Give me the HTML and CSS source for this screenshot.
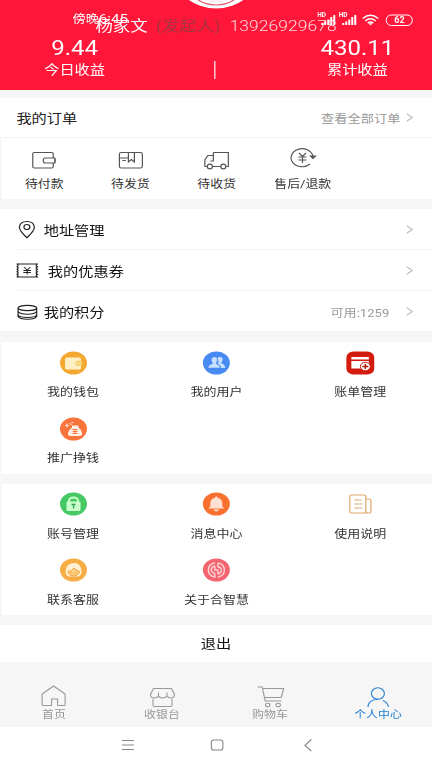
FILE: index.html
```html
<!DOCTYPE html>
<html lang="zh-CN">
<head>
<meta charset="utf-8">
<title>个人中心</title>
<link rel="stylesheet" href="styles.css">
</head>
<body>
<div class="screen">
  <header class="hero">
    <svg class="avatar" viewBox="0 0 60 10" preserveAspectRatio="none"><ellipse cx="30" cy="-27" rx="42" ry="35.500" fill="#fff"/><ellipse cx="30" cy="-27" rx="33" ry="32" fill="#fff" stroke="#e0566a" stroke-width="1.200"/><ellipse cx="30" cy="-26" rx="26" ry="28.500" fill="#fbeeee"/></svg>
    <div class="user"><span>杨家文</span><span class="role">(发起人)</span><span class="phone">13926929678</span></div>
    <div class="stats">
      <div class="stat"><b>9.44</b><span>今日收益</span></div>
      <i class="bar"></i>
      <div class="stat"><b>430.11</b><span>累计收益</span></div>
    </div>
    <div class="status">
      <span class="clock">傍晚<em>6:45</em></span>
      <svg class="signals" viewBox="0 0 98 16" preserveAspectRatio="none">
        <g fill="#fff"><text x="0" y="6.500" class="hd">HD</text><text x="21.500" y="6.500" class="hd">HD</text>
        <path d="M4 12h2v2H4zM7 10.500h2V14H7zM10 8.500h2V14h-2zM13 6h2v8h-2zM16 4h2v10h-2zM25 12h2v2h-2zM28 10.500h2V14h-2zM31 8.500h2V14h-2zM34 6h2v8h-2zM37 4h2v10h-2z"/></g>
        <g fill="none" stroke="#fff" stroke-width="1.500"><path d="M45.500 7.500q7.500-6.500 15.500 0M48 10q5-4.300 10.500 0M50.500 12.200q2.700-2.200 5.500 0"/><rect x="69" y="4" width="26" height="10.500" rx="5" stroke-width="1"/></g>
        <path d="M51.500 12.500q1.700-1 3.500 0l-1.700 2z" fill="#fff"/>
        <text x="77" y="12.500" class="bat">62</text>
      </svg>
    </div>
  </header>

  <section class="orders">
    <div class="orders-head"><span class="title">我的订单</span><span class="more">查看全部订单</span><svg class="arrow" viewBox="0 0 7 9" preserveAspectRatio="none"><path d="M.5 .7L6 4.500L.5 8.300"/></svg></div>
    <div class="orders-grid">
      <div class="order"><svg class="line" viewBox="0 0 30 24" preserveAspectRatio="none"><path d="M24 10V6q0-1.500-1.500-1.500H5Q3.500 4.500 3.500 6v12.500Q3.500 20 5 20h17.500q1.500 0 1.500-1.500V15M16 10h9.500v5H16q-2 0-2-2.500t2-2.500M26 10.500v4"/></svg><span>待付款</span></div>
      <div class="order"><svg class="line" viewBox="0 0 30 24" preserveAspectRatio="none"><rect x="3.500" y="4.500" width="23" height="15.500" rx="1.800"/><path d="M4 10h8M6.500 12.500H10M12.500 4.500V14l3-2.500 3 2.500V4.500"/></svg><span>待发货</span></div>
      <div class="order"><svg class="line" viewBox="0 0 30 24" preserveAspectRatio="none"><path d="M12 4.500h15v14h-2M19 18.500H11M5.500 18.500H3.500V12l3-4.500H12M12 4.500V13H9"/><ellipse cx="8.500" cy="18.500" rx="2.600" ry="2.300"/><ellipse cx="22" cy="18.500" rx="2.600" ry="2.300"/></svg><span>待收货</span></div>
      <div class="order"><svg class="line" viewBox="0 0 30 24" preserveAspectRatio="none"><path d="M22 18A11 9 0 1 1 25 10.500"/><path d="M22.500 10h5L25 12.500z" fill="#555"/><path d="M11 7l3.500 3.500L18 7M14.500 10.500V17M10.500 11h8M10.500 14h8"/></svg><span>售后/退款</span></div>
    </div>
  </section>

  <section class="rows">
    <div class="row"><svg class="pin dark" viewBox="0 0 22 20" preserveAspectRatio="none"><path d="M10.500 18.700Q3 12 3 8.300 3.500 2.500 10.500 2.500t7.500 5.800Q18 12 10.500 18.700z"/><ellipse cx="10.500" cy="8" rx="3" ry="2.500"/></svg><span class="label">地址管理</span><svg class="arrow" viewBox="0 0 7 9" preserveAspectRatio="none"><path d="M.5 .7L6 4.500L.5 8.300"/></svg></div>
    <div class="row"><svg class="coupon dark" viewBox="0 0 22 20" preserveAspectRatio="none"><path d="M0 4h21.500M0 17h21.500"/><path d="M.5 4q2.500 1.100 0 2.600 2.500 1.300 0 2.600 2.500 1.300 0 2.600 2.500 1.300 0 2.600 2.500 1.300 0 2.600M21 4q-2.500 1.100 0 2.600-2.500 1.300 0 2.600-2.500 1.300 0 2.600-2.500 1.300 0 2.600-2.500 1.300 0 2.600"/><path d="M7.500 7l3.300 3L14 7M10.800 10v4.500M7 10.500h7.500M7 12.500h7.500" stroke-width="1"/></svg><span class="label">我的优惠券</span><svg class="arrow" viewBox="0 0 7 9" preserveAspectRatio="none"><path d="M.5 .7L6 4.500L.5 8.300"/></svg></div>
    <div class="row"><svg class="coins dark" viewBox="0 0 22 20" preserveAspectRatio="none"><ellipse cx="11" cy="6" rx="9.300" ry="2.700"/><path d="M1.700 6v3.500q1.500 2.700 9.300 2.700t9.300-2.700V6M1.700 9.500V13q1.500 2.500 9.300 2.500t9.300-2.500V9.500M1.700 13v1.500Q3 17.200 11 17.200t9.300-2.700V13" stroke-width="1.150"/></svg><span class="label">我的积分</span><span class="points">可用:1259</span><svg class="arrow" viewBox="0 0 7 9" preserveAspectRatio="none"><path d="M.5 .7L6 4.500L.5 8.300"/></svg></div>
  </section>

  <section class="card">
    <div class="tile"><svg viewBox="0 0 30 24" preserveAspectRatio="none"><ellipse cx="15" cy="12" rx="13.500" ry="11.500" fill="#f5a830"/><rect x="6.500" y="6.500" width="16" height="12" rx="1.500" fill="#fff0c8"/><path d="M18 10h5.500v4.500H18q-2-2.200 0-4.500z" fill="#f9dc83" stroke="#eebf55" stroke-width=".6"/></svg><span>我的钱包</span></div>
    <div class="tile"><svg viewBox="0 0 30 24" preserveAspectRatio="none"><ellipse cx="15" cy="12" rx="13.500" ry="11.500" fill="#478af2"/><g fill="#c9e0ff"><path d="M16 7q3-2 5 0 1 3-1.500 5 4 1 4.500 5h-4q-.5-3-3.500-4.500 1.500-2-.5-5.500z"/><path d="M10 7.500Q13 4 16 7.500q.5 3-1.500 5 4 1 4.500 4.500H6.500q.5-3.500 5-4.500-2-2-1.500-5z" stroke="#478af2" stroke-width=".5"/></g></svg><span>我的用户</span></div>
    <div class="tile"><svg viewBox="0 0 30 24" preserveAspectRatio="none"><rect x="1" y=".5" width="28" height="23" rx="7" ry="6" fill="#d31c0e"/><path d="M6 6h17.500v2.500H6zM6 10h17.500v7.500H6z" fill="#fff"/><ellipse cx="20" cy="15.500" rx="5" ry="4.200" fill="#fff" stroke="#d31c0e"/><path d="M17 15.500h6M20 13v5" stroke="#b21c10" stroke-width="1.500"/></svg><span>账单管理</span></div>
    <div class="tile"><svg viewBox="0 0 30 24" preserveAspectRatio="none"><ellipse cx="15" cy="12" rx="13.500" ry="11.500" fill="#f8743b"/><path d="M13.500 8.500h6.500v2q4 3 3.500 6.500-.3 2-2 2h-10q-2 0-2-2 0-4 4-6.500z" fill="#fff0e4"/><path d="M14 12.500h5M14 14.500h5M16.500 12v5M14 16.500h5" stroke="#f8743b"/><path d="M6.500 8.500h4M8.500 6.500v4M11 6.500l2 1M13 5.500h2" stroke="#ffe2d2" stroke-width="1.200"/></svg><span>推广挣钱</span></div>
  </section>

  <section class="card second">
    <div class="tile"><svg viewBox="0 0 30 24" preserveAspectRatio="none"><ellipse cx="15" cy="12" rx="13.500" ry="11.500" fill="#46c964"/><path d="M10.500 10V8.500Q11 5.500 15 5.500t4.500 3V10" fill="none" stroke="#c8ffcb" stroke-width="2"/><rect x="8" y="9.500" width="14" height="9.500" rx="1" fill="#c8ffcb"/><path d="M13 12.500h4M15 12.500v4" stroke="#32a150" stroke-width="1.300"/></svg><span>账号管理</span></div>
    <div class="tile"><svg viewBox="0 0 30 24" preserveAspectRatio="none"><ellipse cx="15" cy="12" rx="13.500" ry="11.500" fill="#f8702e"/><path d="M15 4.500q1.300 0 1.300 1.300 4.700 1 4.700 6v2.700l2 2H7l2-2v-2.700q0-5 4.700-6 0-1.300 1.300-1.300zM12 17.500h6q-1 2-3 2t-3-2z" fill="#ffe0d2"/></svg><span>消息中心</span></div>
    <div class="tile"><svg viewBox="0 0 30 24" preserveAspectRatio="none"><g fill="none" stroke="#dfa86a" stroke-width="1.200"><path d="M22 21H6q-1.500 0-1.500-1.500v-15Q4.500 3 6 3h13q1.500 0 1.500 1.500V19q0 2 2 2h1.500q1.500 0 1.500-1.500V8.500q0-1.500-1.500-1.500h-3"/><path d="M9 8h7M9 12h8M9 16h8"/></g></svg><span>使用说明</span></div>
    <div class="tile"><svg viewBox="0 0 30 24" preserveAspectRatio="none"><ellipse cx="15" cy="12" rx="13.500" ry="11.500" fill="#f7ad45"/><path d="M7 13.500Q7.500 5.500 15 5t8 8.500q0 4-3 5H10q-3-1-3-5z" fill="#fff0d2"/><path d="M9.500 13.500q4-.5 6-3.500 1.500 2.500 5.500 3.500-.5 4-6 4.500-5-.5-5.500-4.500z" fill="#ffd184" stroke="#f1a43a"/><path d="M11.500 15.500q1.200-2 2.500 0M16 15.500q1.200-2 2.500 0" fill="none" stroke="#f1a43a"/></svg><span>联系客服</span></div>
    <div class="tile"><svg viewBox="0 0 30 24" preserveAspectRatio="none"><ellipse cx="15" cy="12" rx="13.500" ry="11.500" fill="#f46570"/><g fill="none" stroke="#ffd2d4" stroke-width="1.400"><path d="M13.500 5Q7 6 7 12t6.500 7v-4M16.500 5Q23 6 23 12t-6.500 7M16.500 5v4"/><path d="M13.500 8Q10 9 10 12t3.500 3M16.500 9q3.500 0 3.500 3t-3.500 4M13.500 8v4h3v4"/></g></svg><span>关于合智慧</span></div>
  </section>

  <div class="logout">退出</div>

  <nav class="tabs">
    <div class="tab"><svg viewBox="0 0 30 24" preserveAspectRatio="none"><path d="M3.500 10L15 2l11.500 8v11q0 .5-1 .5h-6.500V15h-6v6.500H4.500q-1 0-1-.5z"/></svg><span>首页</span></div>
    <div class="tab"><svg viewBox="0 0 30 24" preserveAspectRatio="none"><path d="M6 4.500h18l3 6q0 3.500-3.500 3.500-2.500 0-4-2-1.500 2-4.500 2T11 12q-1.500 2-4 2-4 0-4-3.500zM11 12V8.500M19.500 12V8.500M5.500 15v6q0 1.500 1.500 1.500h16q1.500 0 1.500-1.500v-6"/></svg><span>收银台</span></div>
    <div class="tab"><svg viewBox="0 0 30 24" preserveAspectRatio="none"><path d="M2.500 3h4.500l3 14h16M7.500 4.500H28.500L26 13.500H9.500"/><ellipse cx="12.500" cy="21" rx="2.200" ry="1.800"/><ellipse cx="23" cy="21" rx="2.200" ry="1.800"/></svg><span>购物车</span></div>
    <div class="tab active"><svg viewBox="0 0 30 24" preserveAspectRatio="none"><ellipse cx="15" cy="9.500" rx="6.500" ry="5.700"/><path d="M15 15.200Q5.500 15.500 5 23M20 16.500q5 2 5.500 6.500"/></svg><span>个人中心</span></div>
  </nav>

  <footer class="system">
    <svg viewBox="0 0 200 16" preserveAspectRatio="none"><path d="M6 3.500h12M6 8h12M6 12.500h12"/><rect x="95.500" y="3" width="11.500" height="10" rx="2.300"/><path d="M195.500 2.500L189 8.500l6.500 5.500"/></svg>
  </footer>
</div>
</body>
</html>
```
FILE: styles.css
```css
* { box-sizing: border-box; }

html, body { margin: 0; height: 768px; overflow: hidden; }

body {
  font-family: Roboto, "Noto Sans CJK SC", sans-serif;
  color: #333;
  background: #f6f6f6;
}

/* The layout is 369px wide and widened to fill the 432px viewport. */
.screen {
  width: 369px;
  height: 768px;
  display: flex;
  flex-direction: column;
  transform: scaleX(1.17073);
  transform-origin: 0 0;
}

svg { display: block; flex: none; }
span { white-space: nowrap; }

.hero {
  position: relative;
  height: 90px;
  flex: none;
  background: #ff1639;
  color: #fff;
}
.avatar { width: 51.2px; height: 10px; margin: 0 auto; }
.user {
  display: flex;
  height: 20px;
  margin-top: 6px;
  padding-left: 81.5px;
  font-size: 14.9px;
  line-height: 20px;
}
.role { margin-left: 7px; color: #a93240; }
.phone { margin-left: 8px; color: #ffd9de; font-weight: 300; letter-spacing: .05px; }
.stats { display: flex; align-items: flex-end; height: 43px; }
.stat {
  flex: 1;
  display: flex;
  flex-direction: column;
  align-items: center;
  font-size: 13px;
  line-height: 18px;
}
.stat:first-child { padding-right: 55px; }
.stat:last-child { padding-left: 58px; }
.stat b { font-size: 20.5px; font-weight: 400; line-height: 23px; margin-bottom: 1px; }
.bar { width: 1px; height: 18px; background: #fff; }
.status {
  position: absolute;
  inset: 11px 0 auto 62px;
  display: flex;
  align-items: center;
  height: 16px;
}
.clock { font-size: 11.2px; line-height: 16px; }
.clock em { font-size: 13px; font-style: normal; }
.signals { width: 83.7px; height: 16px; margin: 0 14px 0 auto; }
.hd { font-size: 6.5px; font-weight: 700; }
.bat { font-size: 9px; font-weight: 700; fill: #fff; }

.orders { margin-top: 8px; height: 101px; flex: none; background: #fff; }
.orders-head {
  display: flex;
  align-items: center;
  height: 40px;
  padding: 0 16.5px 0 14px;
  border-bottom: 1.5px solid #f4f4f4;
}
.title { flex: 1; font-size: 13px; color: #222; }
.more { font-size: 11.3px; color: #999; margin-right: 4.5px; }
.arrow { width: 6px; height: 9px; fill: none; stroke: #bbb; stroke-width: 1.1; }
.orders-grid {
  display: grid;
  grid-template-columns: repeat(5, 1fr);
  height: 61px;
  border-left: 1px solid #f4f4f4;
}
.order, .tile, .tab { display: flex; flex-direction: column; align-items: center; }
.order { padding-top: 10px; font-size: 11px; line-height: 16px; color: #333; }
.order svg { width: 25.6px; height: 24px; margin-bottom: 5px; }
.order:last-child svg { margin-top: -2px; margin-bottom: 7px; }
.line { fill: none; stroke: #555; stroke-width: 1.2; }

.rows { margin-top: 10px; height: 122px; flex: none; background: #fff; padding-left: 14px; }
.row {
  display: flex;
  align-items: center;
  height: 41px;
  padding-right: 16.5px;
  border-bottom: 1.5px solid #f4f4f4;
}
.row:last-child { border: 0; }
.row svg:first-child { width: 18.8px; height: 20px; margin-right: 4.5px; }
.row .coupon:first-child { margin-right: 8px; }
.dark { fill: none; stroke: #222; stroke-width: 1.2; }
.label { flex: 1; font-size: 13px; color: #111; }
.points { font-size: 11.2px; color: #999; margin-right: 14px; }

.card {
  display: grid;
  grid-template-columns: repeat(3, 1fr);
  grid-auto-rows: 66px;
  height: 132px;
  flex: none;
  margin-top: 11px;
  background: #fff;
  border-left: 1px solid #f4f4f4;
}
.tile { padding-top: 9px; font-size: 11.1px; line-height: 16px; }
.tile svg { width: 25.6px; height: 24px; margin-bottom: 10px; }
.second { margin-top: 10px; height: 131px; }
.second .tile { padding-top: 8px; }
.second .tile svg { margin-bottom: 11px; }

.logout {
  margin-top: 10px;
  height: 37px;
  flex: none;
  background: #fff;
  text-align: center;
  font-size: 13px;
  line-height: 37px;
  color: #111;
}

.tabs { display: grid; grid-template-columns: repeat(4, 1fr); height: 65px; flex: none; }
.tab { padding-top: 22px; font-size: 10.2px; line-height: 14px; color: #999; }
.tab svg {
  width: 25.6px;
  height: 24px;
  fill: none;
  stroke: currentColor;
  stroke-width: 1.1;
}
.active { color: #2680d0; }

.system { flex: 1; background: #fff; }
.system svg {
  width: 170.8px;
  height: 16px;
  margin: 10px 0 0 99px;
  fill: none;
  stroke: #888;
  stroke-width: 1.1;
}
```
